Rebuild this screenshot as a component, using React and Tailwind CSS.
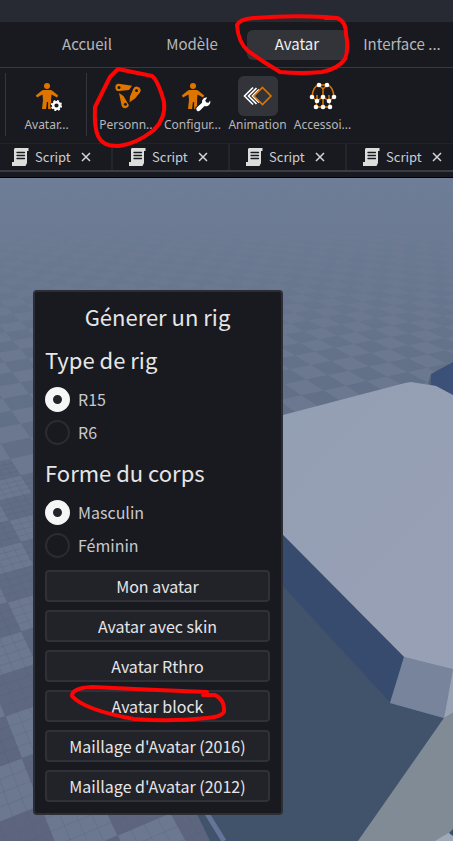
import { useState } from "react";

const ribbonTabs = ["Accueil", "Modèle", "Avatar", "Interface ..."];

const rigButtons = [
  "Mon avatar",
  "Avatar avec skin",
  "Avatar Rthro",
  "Avatar block",
  "Maillage d'Avatar (2016)",
  "Maillage d'Avatar (2012)",
];

// perspective projection of the baseplate, u goes far left and v goes far right
const project = (u, v) => {
  const a = (u - 0.5) * 0.0293;
  const b = (v - 0.5) * 0.01257;
  const w = 1 + a + b;
  return [(347 - 267 * a + 2018 * b) / w, (378 + 20 * a + 20 * b) / w];
};

const inView = (p) => p[0] > -120 && p[0] < 530 && p[1] > 160 && p[1] < 960;

const buildFloor = () => {
  let tiles = "";
  let lines = "";
  const point = (p) => `${p[0].toFixed(1)} ${p[1].toFixed(1)}`;
  for (let u = -18; u < 50; u++) {
    for (let v = -22; v < 40; v++) {
      const p = project(u, v);
      if (!inView(p)) continue;
      if ((u + v) % 2 === 0) {
        tiles += `M${point(p)}L${point(project(u + 1, v))}L${point(project(u + 1, v + 1))}L${point(project(u, v + 1))}Z`;
      }
      if (p[1] > 480) {
        for (let i = 0; i < 4; i++) {
          const s = i / 4;
          lines += `M${point(project(u + s, v))}L${point(project(u + s, v + 1))}`;
          lines += `M${point(project(u, v + s))}L${point(project(u + 1, v + s))}`;
        }
      }
    }
  }
  return { tiles, lines };
};

const floor = buildFloor();

function Scene() {
  return (
    <svg
      className="absolute inset-0 w-full h-full"
      viewBox="0 178 453 663"
      preserveAspectRatio="xMinYMin slice"
      aria-hidden="true"
    >
      <defs>
        <linearGradient id="ground" x1="0" y1="0" x2="0" y2="1">
          <stop offset="0" stopColor="#6b7b94" />
          <stop offset="0.3" stopColor="#627088" />
          <stop offset="1" stopColor="#5c657d" />
        </linearGradient>
        <linearGradient id="haze" x1="0" y1="0" x2="0" y2="1">
          <stop offset="0" stopColor="#6f7f99" stopOpacity="0.8" />
          <stop offset="0.25" stopColor="#6b7990" stopOpacity="0" />
        </linearGradient>
        <linearGradient id="top" x1="0" y1="0" x2="0.6" y2="1">
          <stop offset="0" stopColor="#939fb3" />
          <stop offset="1" stopColor="#98a0b5" />
        </linearGradient>
      </defs>
      <rect x="0" y="178" width="453" height="663" fill="url(#ground)" />
      <path d={floor.tiles} fill="#6b788f" />
      <path d={floor.lines} stroke="#535e76" strokeOpacity="0.25" fill="none" />
      <rect x="0" y="178" width="453" height="663" fill="url(#haze)" />

      <path d="M430 385L431 374L453 362V396L436 386Z" fill="#3c5177" />
      <path d="M428 384L431 374L431 385Z" fill="#4f657f" />
      <path d="M180 560L283 585L390 703L444 718L358 841H210L196 812Z" fill="#41536a" />
      <path d="M206 812L224 841" stroke="#64759a" strokeWidth="5" />
      <path d="M283 415L405 383L411 382L436 386L453 395V670L404 657L283 535Z" fill="url(#top)" />
      <path d="M283 535L404 657L390 703L283 586Z" fill="#364b6d" />
      <path d="M404 657L453 669L444 718L390 703Z" fill="#77849b" />
      <path d="M453 669V713L444 718Z" fill="#9aa3b3" />
      <path d="M444 718L453 713V841H358Z" fill="#808b96" />
      <path d="M435 841L450 832L453 836V841Z" fill="#9ea8b7" />
      <path d="M449 833L453 829V836Z" fill="#34506b" />
    </svg>
  );
}

function Person() {
  return (
    <>
      <circle cx="20" cy="10" r="3" fill="#dd7500" />
      <path
        d="M16 14h8l2 1.2 5.2 4.2-1.2 2-5.5-2.8-.4 4.400v10h-3V26h-1.200l-.8 7H15l1-9-.5-5.400L10 21.400l-1.200-2 5.200-4.200z"
        fill="#dd7500"
      />
    </>
  );
}

function AvatarIcon() {
  return (
    <svg viewBox="0 0 40 40" className="w-10 h-10">
      <Person />
      <circle cx="29.5" cy="29.5" r="6.3" fill="#191a1f" />
      <circle cx="29.5" cy="29.5" r="3.3" fill="none" stroke="#fff" strokeWidth="2.4" />
      <circle cx="29.5" cy="29.5" r="4.8" fill="none" stroke="#fff" strokeWidth="1.6" strokeDasharray="2 1.77" />
    </svg>
  );
}

function ConfigIcon() {
  return (
    <svg viewBox="0 0 40 40" className="w-10 h-10">
      <Person />
      <path d="M24 34l7-7" stroke="#191a1f" strokeWidth="6" />
      <path
        d="M24 31.200l5-4.500a4.500 4.500 0 0 1 5.200-5.200l-2 3 1.200 2 2.200.2 1.600-2.200a4.400 4.400 0 0 1-5.700 5.500l-4.500 4.600a2.200 2.200 0 0 1-3-3.400z"
        fill="#fff"
      />
    </svg>
  );
}

function RigIcon() {
  return (
    <svg viewBox="0 0 40 40" className="w-10 h-10">
      <g fill="#dd7500">
        <path d="M10.800 7.700L24 9.800 21 14 11.300 15.100a3.700 3.700 0 0 1-.5-7.400z" />
        <path d="M32 16.500L27 22.500 21.500 26.300 22 20.500 25.300 12.700a3.800 3.800 0 0 1 6.700 3.800z" />
        <path d="M20.900 29.200a3.800 3.800 0 0 1-7.200.8L11 17l4.500 3z" />
      </g>
      <g fill="#191a1f">
        <circle cx="11" cy="11.4" r="1.5" />
        <circle cx="28.5" cy="14.6" r="1.5" />
        <circle cx="17.4" cy="28.2" r="1.5" />
      </g>
    </svg>
  );
}

function AnimationIcon() {
  return (
    <svg viewBox="0 0 40 40" className="w-10 h-10 rounded-md bg-[#333439]" fill="none" strokeWidth="1.6">
      <path d="M15 11.500L6.500 20l8.500 8.500M18.500 12L10.500 20l8 8M21 13.500L14.500 20l6.500 6.500" stroke="#fff" />
      <path d="M24.500 11.500L33 20l-8.500 8.500L16 20z" fill="#333439" stroke="#dd7500" />
    </svg>
  );
}

const nodes = [
  [16, 9], [24, 9], [9, 21], [20, 21], [31, 21],
  [14, 25], [26, 25], [13, 31], [20, 31], [27, 31],
];

function AccessoryIcon() {
  return (
    <svg viewBox="0 0 40 40" className="w-10 h-10">
      <path
        d="M16 9h8l-4 4zM20 13v18M16 9q-6 1-7 12l5 4M24 9q6 1 7 12l-5 4M14 19v6l-1 6h14l-1-6v-6M14 25l6-4 6 4"
        fill="none"
        stroke="#dd7500"
        strokeWidth="1.5"
      />
      {nodes.map(([x, y]) => (
        <circle key={`${x}-${y}`} cx={x} cy={y} r="2.3" fill="#fff" />
      ))}
    </svg>
  );
}

function ScriptIcon() {
  return (
    <svg viewBox="0 0 17 18" className="w-[17px] h-[18px] shrink-0" aria-hidden="true">
      <path d="M3 0h13.500v3H15v12l-1.500 3H0v-4h2V1z" fill="#dcdedc" />
      <path d="M5 4.500h7.500M5 7.500h7.500M5 10.500h7.500" stroke="#191a1f" strokeWidth="1.3" strokeLinecap="round" />
    </svg>
  );
}

function ToolButton({ label, children }) {
  return (
    <button className="w-[65px] shrink-0 flex flex-col items-center">
      {children}
      <span className="text-xs leading-[18px] whitespace-nowrap">{label}</span>
    </button>
  );
}

function ScriptTab() {
  return (
    <div className="w-[117px] h-full shrink-0 flex items-center pl-4 border-r-2 border-r-[#24252a]">
      <ScriptIcon />
      <span className="ml-[6px] text-[13px] leading-5 text-[#c9cdd6]">Script</span>
      <button aria-label="Fermer" className="ml-[10px]">
        <svg viewBox="0 0 10 10" className="w-[10px] h-[10px]">
          <path d="M1 1l8 8M9 1l-8 8" stroke="#d5d6da" strokeWidth="1.5" />
        </svg>
      </button>
    </div>
  );
}

function RadioGroup({ name, options, value, onChange }) {
  return (
    <div className="flex flex-col gap-[7px]">
      {options.map((option) => (
        <label key={option} className="h-[26px] flex items-center gap-2 text-[16px] text-[#c8c9cd]">
          <input
            type="radio"
            name={name}
            checked={value === option}
            onChange={() => onChange(option)}
            className="appearance-none w-[25px] h-[25px] rounded-full border-2 border-[#2b2c31] checked:border-8 checked:border-[#f6f6f6] checked:bg-[#232429]"
          />
          {option}
        </label>
      ))}
    </div>
  );
}

function RigDialog() {
  const [rig, setRig] = useState("R15");
  const [body, setBody] = useState("Masculin");

  return (
    <section className="relative w-[250px] pl-[10px] pr-[11px] pt-2 pb-[11px] rounded-sm border-2 border-[#2c2e36] bg-[#191a1f] text-[#e6e6e8] font-['Noto_Sans_CJK_SC',sans-serif]">
      <h1 className="text-center text-[22px] leading-8">Génerer un rig</h1>
      <h2 className="mt-3 mb-3 text-[22px] leading-[30px]">Type de rig</h2>
      <RadioGroup name="rig" options={["R15", "R6"]} value={rig} onChange={setRig} />
      <h2 className="mt-3 mb-3 text-[22px] leading-[30px]">Forme du corps</h2>
      <RadioGroup name="body" options={["Masculin", "Féminin"]} value={body} onChange={setBody} />
      <div className="mt-3 flex flex-col gap-2">
        {rigButtons.map((label) => (
          <button
            key={label}
            className="h-8 rounded border-2 border-[#303138] bg-[#222328] text-[16px] leading-7"
          >
            {label}
          </button>
        ))}
      </div>
    </section>
  );
}

function Annotations() {
  return (
    <svg
      viewBox="0 0 453 841"
      className="absolute top-0 left-0 w-[453px] h-[841px] pointer-events-none"
      fill="none"
      stroke="#fb0505"
      strokeWidth="4"
      strokeLinecap="round"
      strokeLinejoin="round"
      aria-hidden="true"
    >
      <path d="M325 18L337 18Q346 21 346 34Q349 49 345 59Q338 69 322 72Q302 74 280 72L264 62L248 51Q238 42 237 25Q240 19 253 18Q290 15 325 17L337 18" />
      <path d="M152 76L118 69L110 77L103 91L95 107Q94 127 98 136Q103 147 119 146Q136 144 154 130Q166 118 164 102Q160 87 155 79Z" />
      <path d="M203 695H215Q225 700 224 712Q221 717 207 718Q170 722 134 719Q84 710 72 696Q72 688 92 687L157 690L207 692" />
    </svg>
  );
}

export default function App() {
  const [tab, setTab] = useState("Avatar");

  return (
    <div className="relative min-h-screen flex flex-col overflow-hidden bg-[#191a1f] text-[#b6b7bc] font-['Noto_Sans',sans-serif]">
      <div className="h-[22px] bg-[#272a32]" />

      <nav className="h-[46px] flex items-center gap-[5px] pl-[37px] border-b border-[#393a40] font-['Noto_Sans_CJK_SC',sans-serif]">
        {ribbonTabs.map((name) => (
          <button
            key={name}
            onClick={() => setTab(name)}
            className={
              tab === name
                ? "w-[100px] h-[30px] shrink-0 rounded-md bg-[#333439] text-[15px] text-[#f0f0f2]"
                : "w-[100px] h-[30px] shrink-0 rounded-md text-[15px]"
            }
          >
            {name}
          </button>
        ))}
      </nav>

      <div className="h-[75px] flex items-start pt-2 pl-[5px]">
        <div className="w-px h-[63px] -mt-[3px] mr-2 bg-[#35363b]" />
        <ToolButton label="Avatar...">
          <AvatarIcon />
        </ToolButton>
        <div className="w-px h-[63px] -mt-[3px] ml-[7px] mr-2 bg-[#35363b]" />
        <ToolButton label="Personn...">
          <RigIcon />
        </ToolButton>
        <ToolButton label="Configur...">
          <ConfigIcon />
        </ToolButton>
        <ToolButton label="Animation">
          <AnimationIcon />
        </ToolButton>
        <ToolButton label="Accessoi...">
          <AccessoryIcon />
        </ToolButton>
      </div>

      <div className="h-[29px] flex -ml-1 border-t border-t-[#222328] border-b-2 border-b-[#3a3b43] font-['Noto_Sans_CJK_SC',sans-serif]">
        <ScriptTab />
        <ScriptTab />
        <ScriptTab />
        <ScriptTab />
      </div>
      <div className="h-[6px] border-b border-black" />

      <main className="relative flex-1 px-[33px] pt-28 pb-[26px]">
        <Scene />
        <RigDialog />
      </main>

      <Annotations />
    </div>
  );
}
